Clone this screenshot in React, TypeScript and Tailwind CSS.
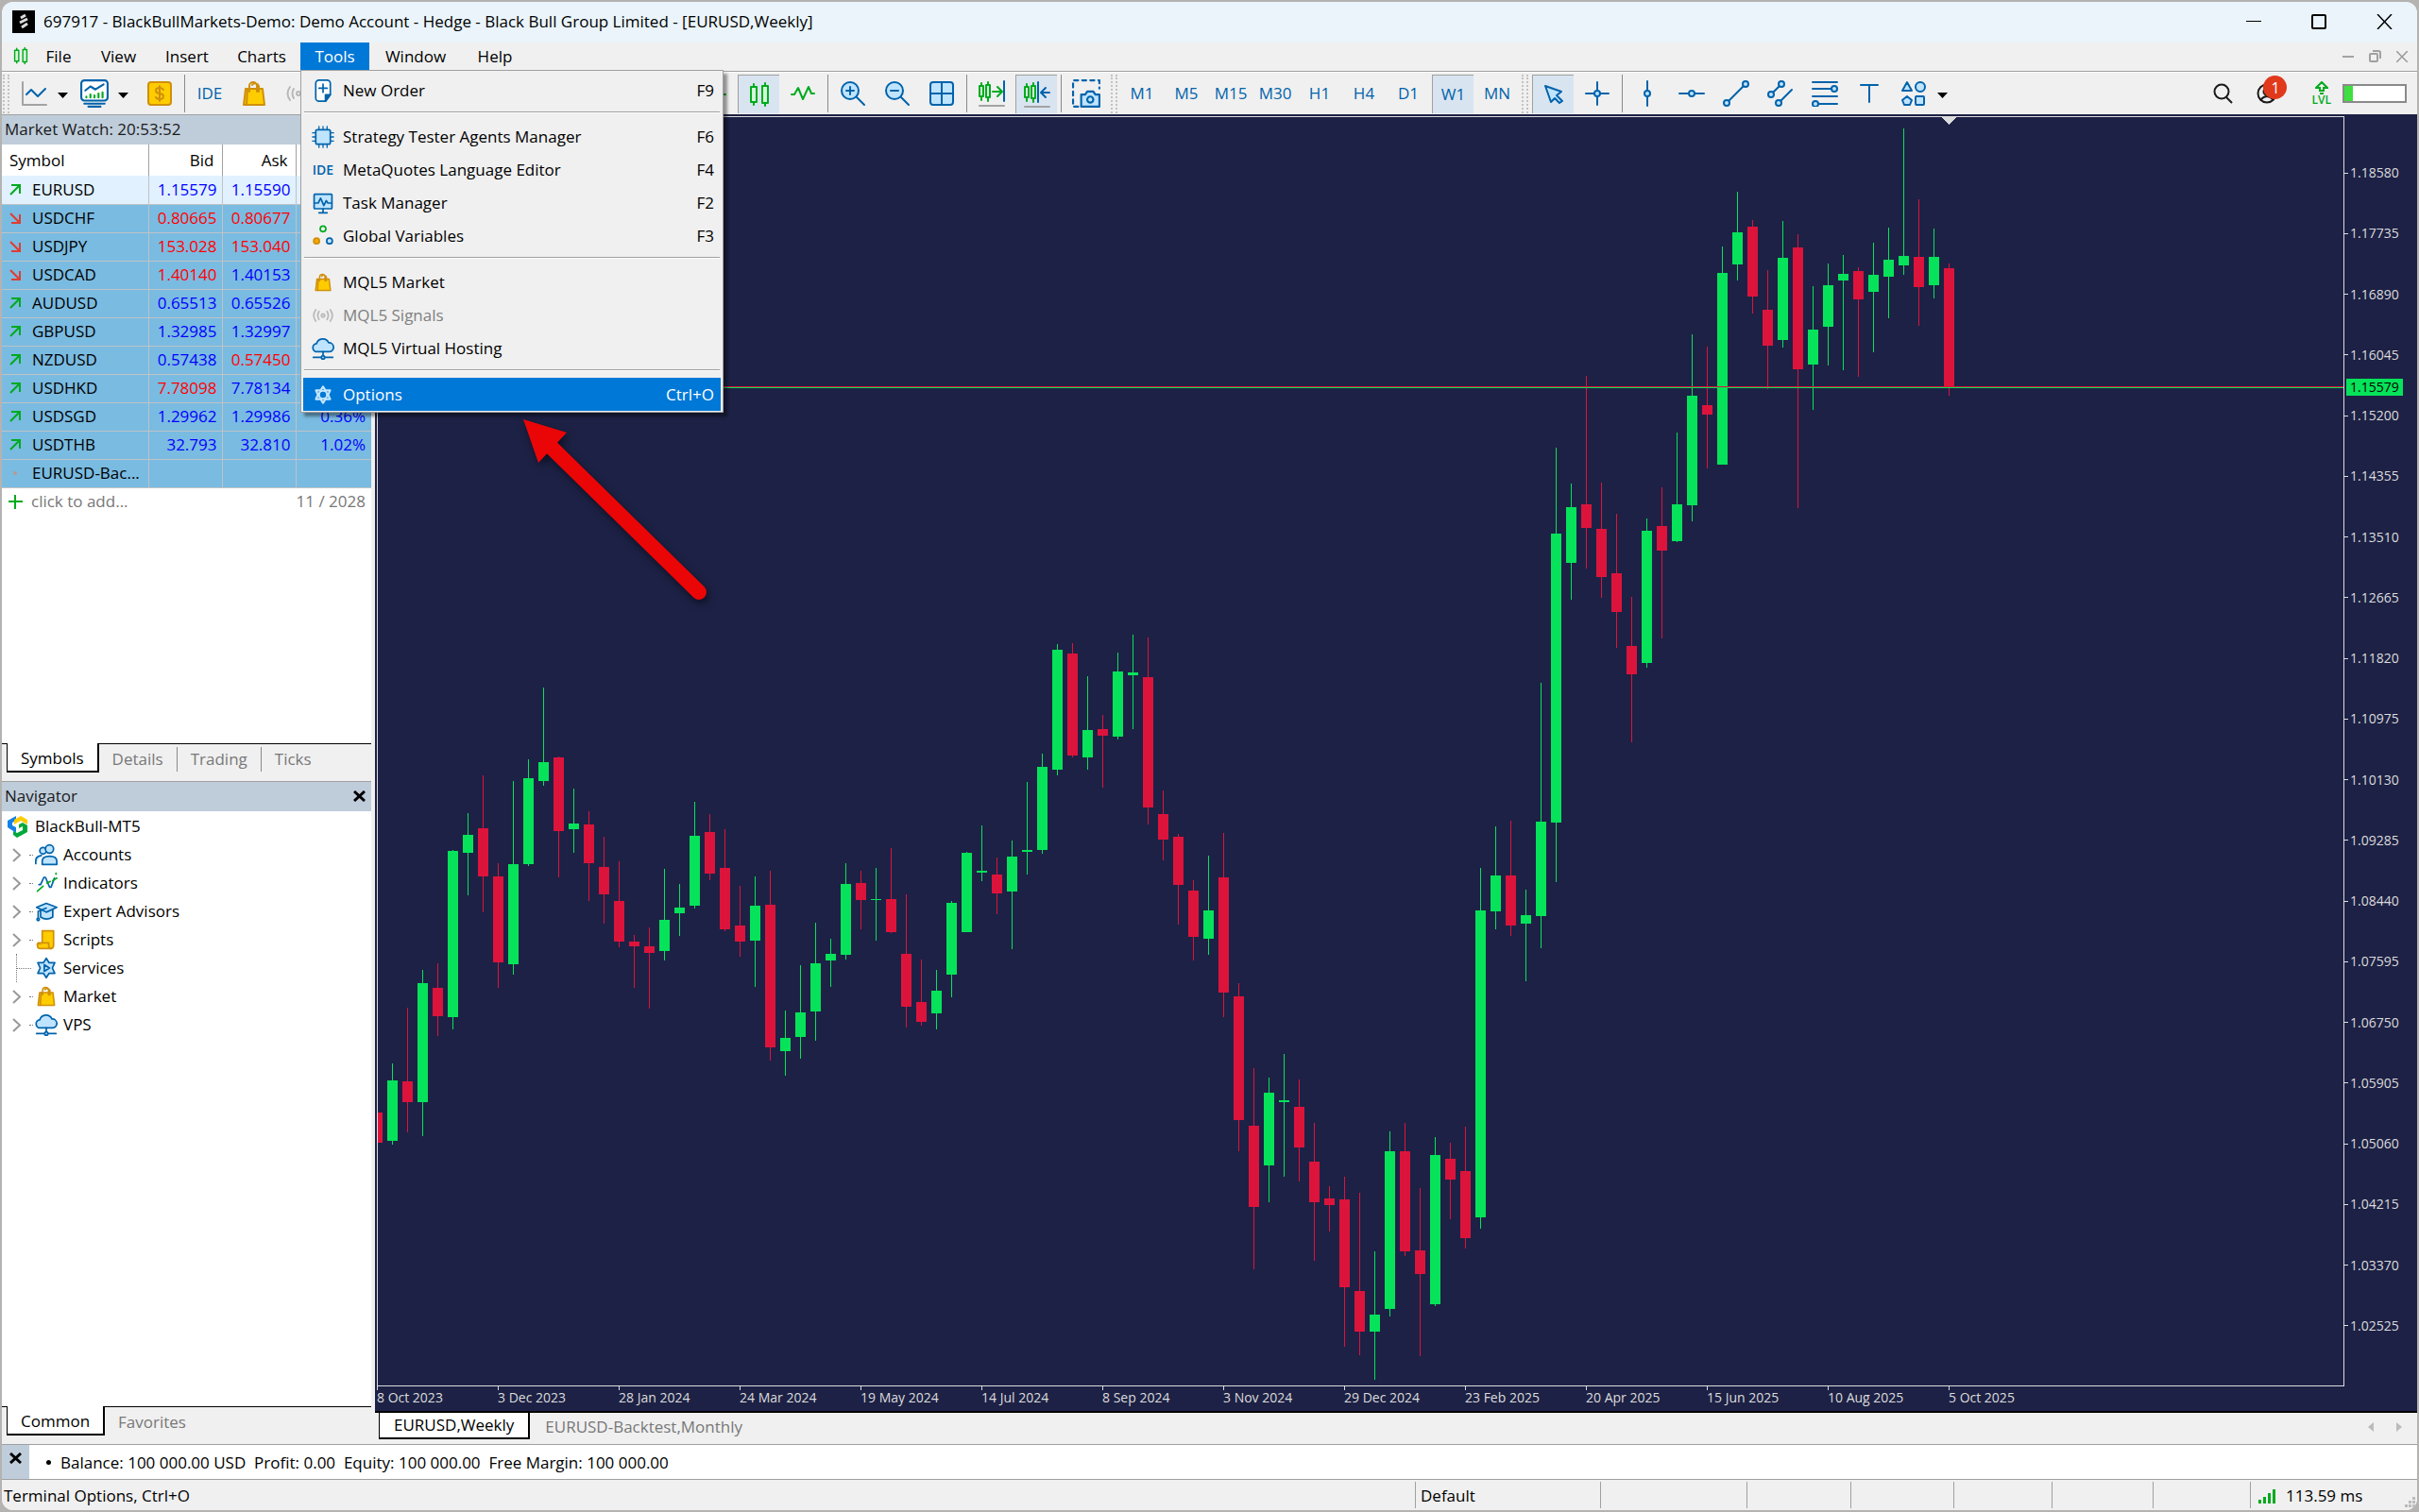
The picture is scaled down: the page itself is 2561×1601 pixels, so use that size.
import React from 'react';
import clsx from 'clsx';

type Candle = [color: 'g' | 'r', high: number, top: number, bottom: number, low: number];

interface Quote {
    symbol: string;
    trend: 'up' | 'down' | 'none';
    bid: string;
    bidUp: boolean;
    ask: string;
    askUp: boolean;
    change: string;
}

const QUOTES: Quote[] = [
    { symbol: 'EURUSD', trend: 'up', bid: '1.15579', bidUp: true, ask: '1.15590', askUp: true, change: '' },
    { symbol: 'USDCHF', trend: 'down', bid: '0.80665', bidUp: false, ask: '0.80677', askUp: false, change: '' },
    { symbol: 'USDJPY', trend: 'down', bid: '153.028', bidUp: false, ask: '153.040', askUp: false, change: '' },
    { symbol: 'USDCAD', trend: 'down', bid: '1.40140', bidUp: false, ask: '1.40153', askUp: true, change: '' },
    { symbol: 'AUDUSD', trend: 'up', bid: '0.65513', bidUp: true, ask: '0.65526', askUp: true, change: '' },
    { symbol: 'GBPUSD', trend: 'up', bid: '1.32985', bidUp: true, ask: '1.32997', askUp: true, change: '' },
    { symbol: 'NZDUSD', trend: 'up', bid: '0.57438', bidUp: true, ask: '0.57450', askUp: false, change: '' },
    { symbol: 'USDHKD', trend: 'up', bid: '7.78098', bidUp: false, ask: '7.78134', askUp: true, change: '' },
    { symbol: 'USDSGD', trend: 'up', bid: '1.29962', bidUp: true, ask: '1.29986', askUp: true, change: '0.36%' },
    { symbol: 'USDTHB', trend: 'up', bid: '32.793', bidUp: true, ask: '32.810', askUp: true, change: '1.02%' },
    { symbol: 'EURUSD-Bac...', trend: 'none', bid: '', bidUp: true, ask: '', askUp: true, change: '' },
];

const PRICES = [
    '1.18580', '1.17735', '1.16890', '1.16045', '1.15200', '1.14355', '1.13510', '1.12665', '1.11820', '1.10975',
    '1.10130', '1.09285', '1.08440', '1.07595', '1.06750', '1.05905', '1.05060', '1.04215', '1.03370', '1.02525',
];

const DATES = [
    '8 Oct 2023', '3 Dec 2023', '28 Jan 2024', '24 Mar 2024', '19 May 2024', '14 Jul 2024', '8 Sep 2024',
    '3 Nov 2024', '29 Dec 2024', '23 Feb 2025', '20 Apr 2025', '15 Jun 2025', '10 Aug 2025', '5 Oct 2025',
];

const TIMEFRAMES = ['M1', 'M5', 'M15', 'M30', 'H1', 'H4', 'D1', 'W1', 'MN'];

// One candle per week, 16px apart. Values are window y positions, the plot begins at PLOT_TOP.
const PLOT_TOP = 124;
const CANDLES: Candle[] = [
    ['r', 1178, 1178, 1210, 1210], ['g', 1126, 1144, 1208, 1212], ['r', 1067, 1145, 1167, 1199],
    ['g', 1027, 1041, 1167, 1203], ['r', 1020, 1046, 1076, 1097], ['g', 900, 901, 1077, 1090],
    ['g', 861, 884, 903, 948], ['r', 821, 877, 928, 966], ['r', 914, 928, 1019, 1046],
    ['g', 827, 915, 1021, 1032], ['g', 804, 824, 915, 917], ['g', 728, 807, 827, 832],
    ['r', 801, 802, 880, 929], ['g', 835, 872, 878, 903], ['r', 859, 873, 914, 954],
    ['r', 886, 918, 947, 978], ['r', 912, 954, 997, 1003], ['r', 990, 997, 1002, 1046],
    ['r', 982, 1002, 1009, 1068], ['g', 920, 974, 1007, 1017], ['g', 936, 961, 967, 991],
    ['g', 849, 885, 959, 962], ['r', 862, 881, 925, 932], ['r', 878, 919, 984, 986],
    ['r', 938, 980, 997, 1013], ['g', 928, 959, 996, 1045], ['r', 922, 958, 1109, 1123],
    ['g', 1070, 1099, 1113, 1139], ['g', 1022, 1072, 1098, 1121], ['g', 977, 1020, 1071, 1102],
    ['g', 994, 1010, 1017, 1045], ['g', 914, 936, 1011, 1016], ['r', 922, 935, 953, 984],
    ['g', 919, 952, 953, 996], ['r', 898, 952, 987, 988], ['r', 947, 1010, 1066, 1088],
    ['r', 1016, 1061, 1082, 1086], ['g', 1027, 1049, 1073, 1090], ['g', 954, 956, 1032, 1056],
    ['g', 902, 903, 987, 987], ['g', 874, 922, 924, 933], ['r', 908, 926, 946, 968],
    ['g', 890, 907, 944, 1005], ['g', 828, 900, 902, 926], ['g', 798, 812, 900, 904],
    ['g', 682, 688, 815, 821], ['r', 681, 692, 800, 802], ['g', 716, 773, 802, 815],
    ['r', 757, 772, 779, 834], ['g', 691, 711, 780, 783], ['g', 672, 712, 715, 772],
    ['r', 675, 717, 855, 873], ['r', 837, 862, 889, 911], ['r', 883, 886, 937, 979],
    ['r', 932, 943, 992, 1017], ['g', 906, 964, 994, 1011], ['r', 882, 929, 1051, 1077],
    ['r', 1041, 1055, 1186, 1219], ['r', 1131, 1192, 1278, 1344], ['g', 1141, 1157, 1234, 1273],
    ['g', 1116, 1165, 1167, 1246], ['r', 1143, 1172, 1215, 1251], ['r', 1189, 1230, 1273, 1335],
    ['r', 1256, 1269, 1276, 1304], ['r', 1246, 1270, 1363, 1426], ['r', 1263, 1367, 1410, 1435],
    ['g', 1325, 1392, 1410, 1461], ['g', 1198, 1219, 1386, 1394], ['r', 1189, 1219, 1325, 1330],
    ['r', 1258, 1324, 1349, 1436], ['g', 1204, 1223, 1381, 1383], ['r', 1210, 1227, 1249, 1291],
    ['r', 1193, 1240, 1311, 1322], ['g', 919, 964, 1289, 1301], ['g', 875, 927, 965, 984],
    ['r', 869, 927, 980, 991], ['g', 942, 969, 978, 1039], ['g', 723, 870, 970, 1004],
    ['g', 474, 565, 871, 934], ['g', 512, 537, 596, 635], ['r', 398, 534, 559, 602],
    ['r', 511, 560, 611, 633], ['r', 544, 607, 648, 686], ['r', 632, 684, 714, 786],
    ['g', 549, 562, 702, 707], ['r', 516, 557, 583, 676], ['g', 458, 534, 573, 574],
    ['g', 354, 419, 535, 552], ['r', 367, 429, 439, 496], ['g', 261, 289, 492, 492],
    ['g', 203, 246, 280, 297], ['r', 233, 240, 314, 332], ['r', 286, 328, 366, 412],
    ['g', 234, 273, 360, 368], ['r', 248, 262, 391, 538], ['g', 303, 349, 386, 434],
    ['g', 279, 302, 346, 387], ['g', 270, 290, 297, 392], ['r', 283, 287, 317, 399],
    ['g', 257, 291, 309, 373], ['g', 241, 275, 293, 337], ['g', 136, 271, 281, 291],
    ['r', 211, 272, 304, 345], ['g', 242, 272, 302, 316], ['r', 279, 284, 411, 419],
];

const BLUE = '#0063ab';
const LIGHT = '#bfe4ff';
const GREEN = '#00aa1e';

interface IconProps {
    size?: number;
    children: React.ReactNode;
    stroke?: string;
    width?: number;
}

function Icon({ size = 28, children, stroke = BLUE, width = 2 }: IconProps) {
    return (
        <svg width={size} height={size} viewBox="0 0 28 28" fill="none" stroke={stroke} strokeWidth={width}
            strokeLinecap="round" strokeLinejoin="round" aria-hidden="true" className="shrink-0">
            {children}
        </svg>
    );
}

function BagIcon({ size }: { size?: number }) {
    return (
        <Icon size={size} stroke="#cf8f0b">
            <path d="M5 9 H23 L25 26 H3 Z" fill="#ffcc00" />
            <path d="M9 12 V6 a4 4 0 0 1 8 0 V12 M12 5 a4 4 0 0 1 7 1 V12 M7 9 L6 26" />
        </Icon>
    );
}

function CloudIcon({ size }: { size?: number }) {
    return (
        <Icon size={size}>
            <path d="M7 18 a5 5 0 0 1 -1 -10 a8 8 0 0 1 15 -1 a5.500 5.500 0 0 1 1 11 Z" fill={LIGHT} />
            <path d="M14 18 V23 M2 25 H11 M17 25 H26" />
            <circle cx="14" cy="25" r="2" fill={LIGHT} />
        </Icon>
    );
}

function SignalIcon({ size }: { size?: number }) {
    return (
        <Icon size={size} stroke="#b8b8b8">
            <circle cx="14" cy="14" r="2" />
            <path d="M9 9 q-3 5 0 10 M19 9 q3 5 0 10 M5 7 q-5 7 0 14 M23 7 q5 7 0 14" />
        </Icon>
    );
}

function CandlesIcon({ size }: { size?: number }) {
    return (
        <Icon size={size} stroke={GREEN}>
            <path d="M8 3 V6 M8 22 V25 M20 2 V5 M20 23 V26" />
            <path d="M5 6 H11 V22 H5 Z M17 5 H23 V23 H17 Z" fill="#d3f7d8" />
        </Icon>
    );
}

function ZoomIcon({ plus }: { plus?: boolean }) {
    return (
        <Icon>
            <circle cx="11" cy="11" r="9" fill={LIGHT} />
            <path d="M18 18 L26 26 M7 11 H15" />
            {plus && <path d="M11 7 V15" />}
        </Icon>
    );
}

function SmallCandles() {
    return (
        <g stroke={GREEN}>
            <path d="M3 3 V21 M10 2 V22" />
            <path d="M1 6 H5 V17 H1 Z M8 5 H12 V18 H8 Z" fill="#d3f7d8" />
        </g>
    );
}

function GearIcon({ size, light }: { size?: number; light?: boolean }) {
    return (
        <Icon size={size} stroke={light ? '#c3e6ff' : BLUE} width={light ? 3 : 2}>
            <path d="M14 2 L17.500 7.500 H24.500 L21.500 14 L24.500 20.500 H17.500 L14 26 L10.500 20.500 H3.500 L6.500 14 L3.500 7.500 H10.500 Z"
                fill={light ? 'none' : LIGHT} />
            {light ? <circle cx="14" cy="14" r="6" /> : <path d="M11.500 10 L18 14 L11.500 18 Z" />}
        </Icon>
    );
}

const HEAD_ICONS = {
    line: (
        <Icon>
            <path d="M2 2 V26 H27" stroke="#a3a3a3" />
            <path d="M6 15 L11 10 L18 17 L26 9" />
        </Icon>
    ),
    stack: (
        <Icon size={30}>
            <path d="M4 24 H24 M8 27 H20" />
            <rect x="1" y="1" width="26" height="20" rx="3" fill="#fff" />
            <path d="M5 11 L10 7 L15 10 L23 5" />
            <path d="M6 18 V17 M10 18 V15 M14 18 V16 M18 18 V14 M22 18 V13" stroke={GREEN} />
        </Icon>
    ),
    dollar: (
        <Icon stroke="#cf8f0b">
            <rect x="2" y="2" width="24" height="24" rx="3" fill="#ffcc00" />
            <path d="M18 10 q-1 -2 -4 -2 q-4 0 -4 3 q0 2.500 4 3 q4 .500 4 3 q0 3 -4 3 q-3 0 -4 -2 M14 6 V22" />
        </Icon>
    ),
};

function ToolButton({ label, active, children }: { label: string; active?: boolean; children: React.ReactNode }) {
    return (
        <button
            type="button"
            aria-label={label}
            className={clsx(
                'flex h-[41px] w-11 shrink-0 items-center justify-center text-[17px] text-[#0063ab]',
                active && 'border-t border-l border-[#a0a0a0] bg-[#d9e4f1]'
            )}
        >
            {children}
        </button>
    );
}

function Separator() {
    return (
        <div className="flex w-[3px] shrink-0 justify-center">
            <div className="h-10 w-px bg-[#8a8a8a]" />
        </div>
    );
}

function Grip() {
    return (
        <div className="flex w-[9px] shrink-0 justify-center gap-[3px]">
            <div className="h-[41px] border-l-2 border-dotted border-[#c2c2c2]" />
            <div className="h-[41px] border-l-2 border-dotted border-[#c2c2c2]" />
        </div>
    );
}

function DropArrow({ className }: { className?: string }) {
    return (
        <button type="button" aria-label="More" className={clsx('shrink-0 pt-1', className)}>
            <svg width="11" height="6" viewBox="0 0 11 6"><path d="M0 0 H11 L5.500 6 Z" /></svg>
        </button>
    );
}

function TitleBar() {
    return (
        <header className="flex h-[43px] shrink-0 items-center bg-[#eaf4fa] pb-[2px] pl-[11px]">
            <svg width="24" height="24" viewBox="0 0 24 24" aria-hidden="true">
                <rect width="24" height="24" fill="#000" />
                <path d="M9 8 L14 5 M8 13 L16 9 M10 18 L16 14" stroke="#ddd" strokeWidth="3" />
            </svg>
            <h1 className="ml-[9px] flex-1 text-[17px]">
                697917 - BlackBullMarkets-Demo: Demo Account - Hedge - Black Bull Group Limited - [EURUSD,Weekly]
            </h1>
            <div className="flex items-center gap-[53px] pr-[26px]">
                <button type="button" aria-label="Minimize" className="flex h-4 w-4 items-center">
                    <span className="h-px w-full bg-black" />
                </button>
                <button type="button" aria-label="Maximize" className="h-4 w-4 rounded-xs border-2 border-black" />
                <button type="button" aria-label="Close">
                    <svg width="17" height="16" viewBox="0 0 17 16"><path d="M1 0 L16 16 M16 0 L1 16" stroke="#000" strokeWidth="1.500" /></svg>
                </button>
            </div>
        </header>
    );
}

interface MenuItemProps {
    label: string;
    shortcut?: string;
    icon: React.ReactNode;
    selected?: boolean;
    disabled?: boolean;
}

function MenuItem({ label, shortcut, icon, selected, disabled }: MenuItemProps) {
    return (
        <button
            type="button"
            role="menuitem"
            disabled={disabled}
            className={clsx(
                'flex h-[35px] items-center pr-[7px] text-left',
                selected ? 'bg-[#0078d7] text-white' : disabled ? 'text-[#808080]' : 'text-black'
            )}
        >
            <span className="flex w-[42px] shrink-0 justify-center">{icon}</span>
            <span className="flex-1">{label}</span>
            <span>{shortcut}</span>
        </button>
    );
}

function MenuLine() {
    return <div role="separator" className="mx-px mt-[5px] mb-[7px] h-[2px] border-t border-[#a0a0a0] bg-white" />;
}

function ToolsMenu() {
    return (
        <div
            role="menu"
            className="absolute top-[29px] left-0 z-20 flex w-[448px] flex-col border border-[#a0a0a0] bg-[#f0f0f0] px-[2px] pt-[3px] pb-px shadow-[4px_4px_3px_rgba(0,0,0,0.4)]"
        >
            <MenuItem label="New Order" shortcut="F9" icon={
                <Icon size={24}>
                    <path d="M9 1 H19 a4 4 0 0 1 4 4 V19 L17 27 H9 a4 4 0 0 1 -4 -4 V5 a4 4 0 0 1 4 -4 Z" fill="#fff" />
                    <path d="M17 27 V19 H23 Z" fill={BLUE} />
                    <path d="M14 6 V16 M9 11 H19" />
                </Icon>
            } />
            <MenuLine />
            <MenuItem label="Strategy Tester Agents Manager" shortcut="F6" icon={
                <Icon size={24}>
                    <path d="M9 1 V27 M14 1 V27 M19 1 V27 M1 9 H27 M1 14 H27 M1 19 H27" strokeWidth="1.500" />
                    <rect x="5" y="5" width="18" height="18" rx="2" fill={LIGHT} />
                </Icon>
            } />
            <MenuItem label="MetaQuotes Language Editor" shortcut="F4"
                icon={<span className="text-sm font-semibold text-[#0063ab]">IDE</span>} />
            <MenuItem label="Task Manager" shortcut="F2" icon={
                <Icon size={24}>
                    <rect x="3" y="3" width="22" height="18" rx="1" fill={LIGHT} />
                    <path d="M4 14 H8 L11 8 L15 17 L18 11 L20 14 H24 M14 21 V25 M9 26 H19" />
                </Icon>
            } />
            <MenuItem label="Global Variables" shortcut="F3" icon={
                <Icon size={24}>
                    <circle cx="14" cy="5" r="3.500" stroke={GREEN} />
                    <circle cx="6" cy="20" r="3.500" stroke="#cf8f0b" fill="#f5a800" />
                    <circle cx="22" cy="20" r="3.500" fill={LIGHT} />
                </Icon>
            } />
            <MenuLine />
            <MenuItem label="MQL5 Market" icon={<BagIcon size={20} />} />
            <MenuItem label="MQL5 Signals" disabled icon={<SignalIcon size={24} />} />
            <MenuItem label="MQL5 Virtual Hosting" icon={<CloudIcon size={24} />} />
            <MenuLine />
            <MenuItem label="Options" shortcut="Ctrl+O" selected icon={<GearIcon size={20} light />} />
        </div>
    );
}

function MenuBar() {
    return (
        <nav className="flex h-[31px] shrink-0 items-start border-b border-[#a0a0a0] bg-[#f0f0f0] pl-[10px]">
            <div className="mt-1 w-[21px]"><CandlesIcon size={20} /></div>
            <button type="button" className="h-[30px] w-[58px]">File</button>
            <button type="button" className="h-[30px] w-[69px]">View</button>
            <button type="button" className="h-[30px] w-[76px]">Insert</button>
            <button type="button" className="h-[30px] w-[82px]">Charts</button>
            <div className="relative">
                <button type="button" aria-haspopup="menu" aria-expanded="true" className="h-[30px] w-[73px] bg-[#0078d7] text-white">
                    Tools
                </button>
                <ToolsMenu />
            </div>
            <button type="button" className="h-[30px] w-[98px]">Window</button>
            <button type="button" className="h-[30px] w-[70px]">Help</button>
            <div className="mt-2 ml-auto flex items-center gap-4 pr-[10px]">
                <button type="button" aria-label="Minimize chart" className="flex h-3 w-3 items-center">
                    <span className="h-0.5 w-full bg-[#a3a3a3]" />
                </button>
                <button type="button" aria-label="Restore chart">
                    <svg width="13" height="13" viewBox="0 0 13 13" fill="none" stroke="#a0a0a0" strokeWidth="2">
                        <rect x="1" y="4" width="8" height="8" rx="1" /><path d="M4 1 H10 a2 2 0 0 1 2 2 V9" />
                    </svg>
                </button>
                <button type="button" aria-label="Close chart">
                    <svg width="12" height="12" viewBox="0 0 12 12"><path d="M0 0 L12 12 M12 0 L0 12" stroke="#999" strokeWidth="1.500" /></svg>
                </button>
            </div>
        </nav>
    );
}

function Toolbar() {
    return (
        <div className="flex h-[45px] shrink-0 items-center gap-[3px] border-t border-white bg-[#f0f0f0]">
            <Grip />
            <ToolButton label="Chart type">{HEAD_ICONS.line}</ToolButton>
            <DropArrow className="w-[14px]" />
            <ToolButton label="Templates">{HEAD_ICONS.stack}</ToolButton>
            <DropArrow className="w-[19px]" />
            <ToolButton label="Deposit">{HEAD_ICONS.dollar}</ToolButton>
            <Separator />
            <ToolButton label="Editor">IDE</ToolButton>
            <ToolButton label="Market"><BagIcon /></ToolButton>
            <ToolButton label="Signals"><SignalIcon /></ToolButton>
            <div className="w-[390px] shrink-0" />
            <ToolButton label="Bar chart">
                <Icon stroke={GREEN}><path d="M8 4 V24 M4 18 H8 M20 4 V24 M20 15 H26" /></Icon>
            </ToolButton>
            <ToolButton label="Candlesticks" active><CandlesIcon /></ToolButton>
            <ToolButton label="Line chart">
                <Icon stroke={GREEN}><path d="M2 15 H5 L9 8 L14 20 L20 7 L23 14 H26" /></Icon>
            </ToolButton>
            <Separator />
            <ToolButton label="Zoom in"><ZoomIcon plus /></ToolButton>
            <ToolButton label="Zoom out"><ZoomIcon /></ToolButton>
            <ToolButton label="Tile windows">
                <Icon>
                    <rect x="2" y="2" width="24" height="24" rx="3" fill={LIGHT} />
                    <path d="M14 2 V26 M2 14 H26" />
                </Icon>
            </ToolButton>
            <Separator />
            <ToolButton label="Auto scroll">
                <Icon>
                    <SmallCandles />
                    <path d="M15 12 H24 M20 7 L25 12 L20 17" stroke={GREEN} />
                    <path d="M27 1 V22" />
                    <path d="M1 27 H27" stroke="#a3a3a3" />
                </Icon>
            </ToolButton>
            <ToolButton label="Chart shift" active>
                <Icon>
                    <SmallCandles />
                    <path d="M15 1 V22 M19 12 H27 M23 7 L18 12 L23 17" />
                    <path d="M1 27 H27" stroke="#a3a3a3" />
                </Icon>
            </ToolButton>
            <Separator />
            <ToolButton label="Screenshot">
                <Icon size={30}>
                    <path d="M6 27 H1 V1 H27 V9" strokeDasharray="4 4" />
                    <path d="M9 15 H13 L15 12 H21 L23 15 H27 V27 H9 Z" fill={LIGHT} />
                    <circle cx="18" cy="20" r="3" />
                </Icon>
            </ToolButton>
            <Grip />
            {TIMEFRAMES.map((frame) => (
                <ToolButton key={frame} label={frame} active={frame === 'W1'}>{frame}</ToolButton>
            ))}
            <Grip />
            <ToolButton label="Cursor" active>
                <Icon><path d="M5 5 L22 11 L17 15 L23 21 L20 23 L15 18 L11 22 Z" fill={LIGHT} /></Icon>
            </ToolButton>
            <ToolButton label="Crosshair">
                <Icon><path d="M14 2 V26 M2 14 H26" /><circle cx="14" cy="14" r="3" fill={LIGHT} /></Icon>
            </ToolButton>
            <Separator />
            <ToolButton label="Vertical line">
                <Icon><path d="M14 1 V27" /><circle cx="14" cy="14" r="3" fill={LIGHT} /></Icon>
            </ToolButton>
            <ToolButton label="Horizontal line">
                <Icon><path d="M1 14 H27" /><circle cx="14" cy="14" r="3" fill={LIGHT} /></Icon>
            </ToolButton>
            <ToolButton label="Trend line">
                <Icon>
                    <path d="M4 24 L24 4" />
                    <circle cx="4" cy="24" r="3" fill={LIGHT} /><circle cx="24" cy="4" r="3" fill={LIGHT} />
                </Icon>
            </ToolButton>
            <ToolButton label="Channel">
                <Icon>
                    <path d="M4 15 L15 4 M12 24 L26 10" />
                    <circle cx="4" cy="15" r="3" fill={LIGHT} /><circle cx="15" cy="4" r="3" fill={LIGHT} />
                    <circle cx="12" cy="24" r="3" fill={LIGHT} />
                </Icon>
            </ToolButton>
            <ToolButton label="Fibonacci">
                <Icon>
                    <path d="M1 2 H27 M1 9 H27 M1 17 H27 M1 25 H27" />
                    <circle cx="24" cy="9" r="3" fill={LIGHT} /><circle cx="4" cy="25" r="3" fill={LIGHT} />
                </Icon>
            </ToolButton>
            <ToolButton label="Text"><Icon><path d="M5 5 H23 M14 5 V23" /></Icon></ToolButton>
            <ToolButton label="Shapes">
                <Icon>
                    <path d="M7 2 L12 11 H2 Z" fill={LIGHT} /><circle cx="21" cy="7" r="5" fill={LIGHT} />
                    <path d="M7 17 L12 21 L10 26 H4 L2 21 Z" fill={LIGHT} />
                    <rect x="16" y="17" width="9" height="9" rx="1" fill={LIGHT} />
                </Icon>
            </ToolButton>
            <DropArrow />
            <div className="ml-auto flex items-center gap-6 pr-[11px]">
                <button type="button" aria-label="Search">
                    <svg width="22" height="22" viewBox="0 0 22 22" fill="none" stroke="#1a1a1a" strokeWidth="2">
                        <circle cx="9" cy="9" r="7.500" /><path d="M14 15 L20 21" />
                    </svg>
                </button>
                <button type="button" aria-label="Notifications" className="relative w-[34px]">
                    <svg width="22" height="22" viewBox="0 0 22 22" fill="none" stroke="#1a1a1a" strokeWidth="2">
                        <circle cx="11" cy="11" r="9.500" /><circle cx="11" cy="9" r="3.500" /><path d="M4 18 q7 -8 14 0" />
                    </svg>
                    <span className="absolute -top-2 left-[7px] flex h-[25px] w-[25px] items-center justify-center rounded-full bg-[#e1391b] text-base text-white">1</span>
                </button>
                <button type="button" aria-label="Level" className="flex flex-col items-center text-[#00aa1e]">
                    <svg width="14" height="14" viewBox="0 0 14 14" fill="none" stroke={GREEN} strokeWidth="2">
                        <path d="M1 7 L7 1 L13 7 H9 V10 H5 V7 Z M5 13 H9" />
                    </svg>
                    <span className="text-xs leading-3 font-semibold">LVL</span>
                </button>
                <div className="-ml-3 h-5 w-[68px] border-2 border-[#8a8a8a] bg-white">
                    <div className="h-full w-[9px] bg-[#3fdf3f]" />
                </div>
            </div>
        </div>
    );
}

function TrendArrow({ trend }: { trend: Quote['trend'] }) {
    if (trend === 'none') return <span className="ml-1 block h-1 w-1 rounded-full bg-[#b99a92]" />;
    return (
        <svg width="12" height="12" viewBox="0 0 12 12" fill="none" strokeWidth="2"
            stroke={trend === 'up' ? GREEN : '#e03c31'}>
            <path d={trend === 'up' ? 'M1 11 L11 1 M2 1 H11 V10' : 'M1 1 L11 11 M2 11 H11 V2'} />
        </svg>
    );
}

function PanelHeader({ title, closable }: { title: string; closable?: boolean }) {
    return (
        <div className="flex h-8 shrink-0 items-center border-t border-[#a0a0a0] bg-[#bfcddb] pr-1.5 pb-px pl-[3px] text-[#1a1a1a]">
            <h2 className="flex-1">{title}</h2>
            {closable && (
                <button type="button" aria-label="Close">
                    <svg width="13" height="12" viewBox="0 0 13 12"><path d="M1 1 L12 11 M12 1 L1 11" stroke="#000" strokeWidth="3" /></svg>
                </button>
            )}
        </div>
    );
}

function PanelTabs({ tabs, lines }: { tabs: string[]; lines?: boolean }) {
    return (
        <div className="flex h-10 shrink-0 bg-[#f0f0f0] text-[#787878]">
            <div className="w-[5px] border-t border-black" />
            <button type="button" className="h-[31px] border-r-2 border-b-2 border-l border-black bg-white px-[14px] pt-0.5 text-black">
                {tabs[0]}
            </button>
            <div className="flex flex-1 items-start border-t border-black">
                {tabs.slice(1).map((tab, i) => (
                    <button key={tab} type="button"
                        className={clsx('mt-[3px] h-[26px] px-[14px]', lines && i < 2 && 'border-r border-[#8a8a8a]')}>
                        {tab}
                    </button>
                ))}
            </div>
        </div>
    );
}

function MarketWatch() {
    return (
        <section className="flex h-[706px] shrink-0 flex-col bg-white">
            <PanelHeader title="Market Watch: 20:53:52" />
            <table className="w-full table-fixed border-collapse">
                <thead>
                    <tr className="h-[33px] text-left">
                        <th className="w-[155px] border-r border-[#a0a0a0] pt-px pl-2 font-normal">Symbol</th>
                        <th className="w-[78px] border-r border-[#a0a0a0] pt-px pr-2 text-right font-normal">Bid</th>
                        <th className="w-[78px] border-r border-[#a0a0a0] pt-px pr-2 text-right font-normal">Ask</th>
                        <th />
                    </tr>
                </thead>
                <tbody>
                    {QUOTES.map((quote, i) => (
                        <tr key={quote.symbol}
                            className={clsx('h-[30px] border-b border-[#bfc3c6]', i === 0 ? 'bg-[#e1f1ff]' : 'bg-[#7abbe1]')}>
                            <td className="border-r border-[#bfc3c6] pl-2">
                                <div className="flex items-center">
                                    <span className="w-6 shrink-0"><TrendArrow trend={quote.trend} /></span>
                                    {quote.symbol}
                                </div>
                            </td>
                            <td className={clsx('border-r border-[#bfc3c6] pr-[5px] text-right', quote.bidUp ? 'text-[#0000ff]' : 'text-[#ff0000]')}>
                                {quote.bid}
                            </td>
                            <td className={clsx('border-r border-[#bfc3c6] pr-[5px] text-right', quote.askUp ? 'text-[#0000ff]' : 'text-[#ff0000]')}>
                                {quote.ask}
                            </td>
                            <td className="pr-1.5 text-right text-[#0000ff]">{quote.change}</td>
                        </tr>
                    ))}
                </tbody>
            </table>
            <div className="flex h-[30px] items-center pr-1.5 pb-px pl-[7px] text-[#787878]">
                <svg width="15" height="15" viewBox="0 0 15 15" className="mr-[9px]"><path d="M7 0 V15 M0 7 H15" stroke={GREEN} strokeWidth="2" /></svg>
                <input aria-label="Add symbol" placeholder="click to add..." className="w-0 flex-1 outline-none placeholder:text-[#787878]" />
                <span>11 / 2028</span>
            </div>
            <div className="flex-1" />
            <PanelTabs tabs={['Symbols', 'Details', 'Trading', 'Ticks']} lines />
        </section>
    );
}

const NAV_ITEMS = [
    {
        label: 'Accounts', icon: (
            <Icon size={24}>
                <circle cx="10" cy="9" r="4" fill={LIGHT} /><path d="M1 25 V21 q0 -5 7 -6" fill={LIGHT} />
                <circle cx="18" cy="7" r="5" fill={LIGHT} /><path d="M9 26 V22 q0 -6 9 -6 q9 0 9 6 V26 Z" fill={LIGHT} />
            </Icon>
        ),
    },
    {
        label: 'Indicators', icon: (
            <Icon size={24}>
                <path d="M5 16 H7 L11 7 H13 L18 19 H20 L24 8" />
                <path d="M3 24 L10 18 M15 14 L19 12 M22 11 L27 8 M26 3 L26 2" stroke={GREEN} />
            </Icon>
        ),
    },
    {
        label: 'Expert Advisors', icon: (
            <Icon size={24}>
                <path d="M7 12 V21 q7 5 15 0 V12" fill={LIGHT} />
                <path d="M14 4 L27 9 L14 15 L2 9 Z" fill={LIGHT} />
                <path d="M14 10 L4 14 V22" /><circle cx="4" cy="24" r="1.500" />
            </Icon>
        ),
    },
    {
        label: 'Scripts', icon: (
            <Icon size={24} stroke="#cf8f0b">
                <path d="M9 3 H23 V21 q0 4 -4 4 H7 q-4 0 -4 -4 V19 H9 Z" fill="#ffcc00" />
                <path d="M4 18 H17 V22 q1 3 3 3" fill="#ffcc00" />
            </Icon>
        ),
    },
    { label: 'Services', leaf: true, icon: <GearIcon size={24} /> },
    { label: 'Market', icon: <BagIcon size={22} /> },
    { label: 'VPS', icon: <CloudIcon size={24} /> },
];

function Navigator() {
    return (
        <section className="flex min-h-0 flex-1 flex-col bg-white">
            <PanelHeader title="Navigator" closable />
            <div className="flex-1 pt-px">
                <div className="flex h-[30px] items-center pl-[5px]">
                    <svg width="22" height="24" viewBox="0 0 22 24" aria-hidden="true" className="mr-2">
                        <path d="M1 6 L10 1 L10 6 L6 8 V11 L10 13 V19 L1 13 Z" fill="#1780e5" />
                        <path d="M8 5 L15 1 L22 5 V10 L15 6 L8 10 Z" fill="#ffcc00" />
                        <path d="M22 11 V18 L11 24 L7 21 V17 L11 19 L17 16 V12 L13 14 V10 L17 8 Z" fill="#00a83a" />
                    </svg>
                    BlackBull-MT5
                </div>
                <ul>
                    {NAV_ITEMS.map((item) => (
                        <li key={item.label} className="flex h-[30px] items-center pl-[9px]">
                            {item.leaf ? (
                                <span className="flex h-full w-[26px] items-center pl-1.5">
                                    <span className="h-full border-l border-dotted border-[#777]" />
                                    <span className="mr-1 flex-1 border-t border-dotted border-[#777]" />
                                </span>
                            ) : (
                                <button type="button" aria-label={`Expand ${item.label}`} className="flex w-[26px] items-center gap-2">
                                    <svg width="12" height="15" viewBox="0 0 12 15" fill="none" stroke="#999" strokeWidth="2"><path d="M3 1 L10 7.500 L3 14" /></svg>
                                    <span className="w-1 border-t border-dotted border-[#777]" />
                                </button>
                            )}
                            <span className="flex w-6 justify-center">{item.icon}</span>
                            <span className="ml-1.5">{item.label}</span>
                        </li>
                    ))}
                </ul>
            </div>
            <PanelTabs tabs={['Common', 'Favorites']} />
        </section>
    );
}

function Plot() {
    return (
        <svg className="block h-full w-full" aria-hidden="true" shapeRendering="crispEdges">
            {CANDLES.map(([color, high, top, bottom, low], i) => {
                const x = i * 16 - 1;
                const fill = color === 'g' ? '#06e35a' : '#dc143c';
                return (
                    <g key={i} fill={fill}>
                        <rect x={x} y={high - PLOT_TOP} width="1" height={low - high} />
                        <rect x={x - 5} y={top - PLOT_TOP} width="11" height={bottom - top} />
                    </g>
                );
            })}
            <rect y="285" width="100%" height="1" fill="#dc143c" />
            <rect y="286" width="100%" height="1" fill="#06e35a" />
            <path d="M1655 0 H1672 L1663.500 8 Z" fill="#dcdcdc" />
        </svg>
    );
}

function PointerArrow() {
    return (
        <svg width="214" height="210" viewBox="0 0 214 210" aria-hidden="true" className="absolute top-[315px] left-[149px] drop-shadow-[2px_4px_4px_rgba(0,0,0,0.5)]">
            <path d="M38 38 L194 191" stroke="#ea0606" strokeWidth="16" strokeLinecap="round" />
            <path d="M8 8 L54 22 L24 54 Z" fill="#ea0606" />
        </svg>
    );
}

function ChartArea() {
    return (
        <main className="flex min-w-0 flex-1 flex-col">
            <div className="relative flex min-h-0 flex-1 flex-col bg-[#1d2145] pt-[2px] pl-[2px] text-sm text-[#dcdcdc]">
                <div className="flex min-h-0 flex-1">
                    <div className="min-w-0 flex-1 border border-[#dcdcdc]"><Plot /></div>
                    <div className="relative flex w-[77px] flex-col pt-7 pb-8">
                        {PRICES.map((price) => (
                            <div key={price} className="flex flex-1 items-center">
                                <span className="mr-[2px] h-px w-1 bg-[#dcdcdc]" />{price}
                            </div>
                        ))}
                        <div className="absolute top-[278px] left-[2px] h-[18px] bg-[#06e35a] px-1 leading-[18px] text-black">1.15579</div>
                    </div>
                </div>
                <div className="flex h-[26px] overflow-hidden">
                    {DATES.map((date) => (
                        <div key={date} className="w-32 shrink-0 whitespace-nowrap">
                            <div className="h-1 w-px bg-[#dcdcdc]" />
                            <div className="leading-4">{date}</div>
                        </div>
                    ))}
                </div>
                <PointerArrow />
            </div>
            <div className="flex h-[35px] shrink-0 items-start border-t-2 border-black bg-[#f0f0f0] pl-1 text-[#787878]">
                <button type="button" className="h-7 border-r-2 border-b-2 border-l border-black bg-white px-[15px] text-black">EURUSD,Weekly</button>
                <button type="button" className="h-[30px] px-4">EURUSD-Backtest,Monthly</button>
                <div className="mt-2.5 ml-auto flex gap-6 pr-4">
                    <button type="button" aria-label="Previous tab">
                        <svg width="6" height="10" viewBox="0 0 6 10"><path d="M6 0 V10 L0 5 Z" fill="#bbb" /></svg>
                    </button>
                    <button type="button" aria-label="Next tab">
                        <svg width="6" height="10" viewBox="0 0 6 10"><path d="M0 0 V10 L6 5 Z" fill="#bbb" /></svg>
                    </button>
                </div>
            </div>
        </main>
    );
}

function StatusBar() {
    const cell = 'my-[2px] border-l border-[#a0a0a0]';
    return (
        <footer className="flex h-[33px] shrink-0 border-t border-[#a0a0a0] bg-[#f0f0f0]">
            <div className="flex flex-1 items-center pt-0.5 pl-[2px]">Terminal Options, Ctrl+O</div>
            <div className={clsx(cell, 'flex w-[196px] items-center pt-0.5 pl-[5px]')}>Default</div>
            <div className={clsx(cell, 'w-[155px]')} />
            <div className={clsx(cell, 'w-[110px]')} />
            <div className={clsx(cell, 'w-[109px]')} />
            <div className={clsx(cell, 'w-[104px]')} />
            <div className={clsx(cell, 'w-[107px]')} />
            <div className={clsx(cell, 'w-[103px]')} />
            <div className={clsx(cell, 'relative flex w-[177px] items-center gap-[11px] pt-0.5 pl-2')}>
                <svg width="18" height="15" viewBox="0 0 18 15" fill={GREEN}>
                    <path d="M0 11 H3 V15 H0 Z M5 8 H8 V15 H5 Z M10 4 H13 V15 H10 Z M15 0 H18 V15 H15 Z" />
                </svg>
                113.59 ms
                <svg width="12" height="12" viewBox="0 0 12 12" fill="#bbb" className="absolute right-px bottom-0">
                    <path d="M8 0 h3 v3 h-3 Z M4 4 h3 v3 h-3 Z M8 4 h3 v3 h-3 Z M0 8 h3 v3 h-3 Z M4 8 h3 v3 h-3 Z M8 8 h3 v3 h-3 Z" />
                </svg>
            </div>
        </footer>
    );
}

export default function App() {
    return (
        <div className="h-screen bg-[#b4b3b2] p-[2px] font-['Open_Sans','Noto_Sans',sans-serif] text-[17px] text-black">
            <div className="flex h-full flex-col overflow-hidden rounded-xl bg-[#f0f0f0]">
                <TitleBar />
                <MenuBar />
                <Toolbar />
                <div className="flex min-h-0 flex-1">
                    <aside className="mr-1 flex w-[391px] shrink-0 flex-col">
                        <MarketWatch />
                        <Navigator />
                    </aside>
                    <ChartArea />
                </div>
                <div className="flex h-[37px] shrink-0 border-t border-[#a0a0a0] bg-white">
                    <div className="flex w-[29px] justify-center bg-[#bfcddb] pt-2">
                        <button type="button" aria-label="Close toolbox" className="h-3">
                            <svg width="13" height="12" viewBox="0 0 13 12"><path d="M1 1 L12 11 M12 1 L1 11" stroke="#000" strokeWidth="3" /></svg>
                        </button>
                    </div>
                    <div className="flex items-center gap-2.5 pt-px pl-[18px] whitespace-pre">
                        <span className="h-[5px] w-[5px] rounded-full bg-black" />
                        {'Balance: 100 000.00 USD  Profit: 0.00  Equity: 100 000.00  Free Margin: 100 000.00'}
                    </div>
                </div>
                <StatusBar />
            </div>
        </div>
    );
}
